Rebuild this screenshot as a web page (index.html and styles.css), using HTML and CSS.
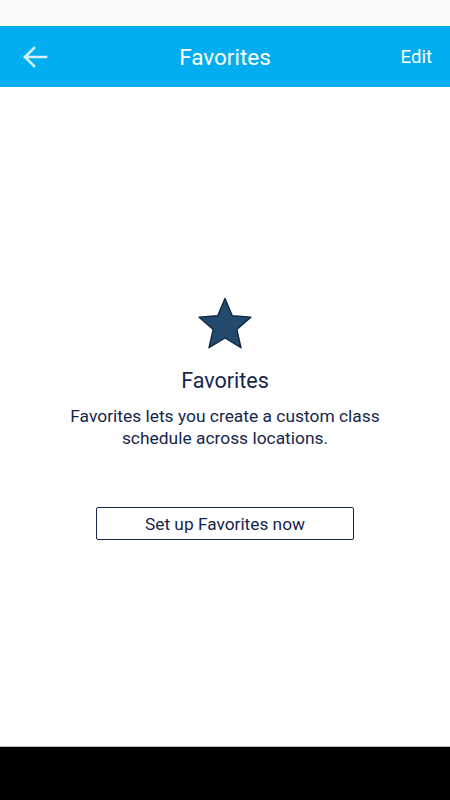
FILE: index.html
```html
<!DOCTYPE html>
<html>
<head>
<meta charset="utf-8">
<link rel="stylesheet" href="styles.css">
</head>
<body>
<div class="screen">
  <div class="status"></div>
  <header class="appbar">
    <svg class="back" width="26" height="22" viewBox="0 0 26 22">
      <path d="M24 11H3M12 2L3 11l9 9" fill="none" stroke="#d6f0fb" stroke-width="2.6" stroke-linecap="square"/>
    </svg>
    <div class="title">Favorites</div>
    <div class="edit">Edit</div>
  </header>
  <main class="content">
    <svg class="star" width="58" height="56" viewBox="0 0 58 56">
      <path d="M29 2.5l7.3 17.2 18.6 1.6-14.1 12.2 4.2 18.2L29 42l-16 9.7 4.2-18.2L3.1 21.3l18.6-1.6z" fill="#234a6c" stroke="#102a45" stroke-width="1.4" stroke-linejoin="round"/>
    </svg>
    <h1 class="heading">Favorites</h1>
    <p class="desc">Favorites lets you create a custom class<br>schedule across locations.</p>
    <button class="setup">Set up Favorites now</button>
  </main>
  <div class="navbar"></div>
</div>
</body>
</html>
```
FILE: styles.css
```css
html, body { margin: 0; padding: 0; }
body { font-family: Roboto, "Noto Sans", sans-serif; background: #fff; }
.screen { width: 450px; height: 800px; display: flex; flex-direction: column; }
.status { height: 26px; background: #fafafa; }
.appbar { height: 61px; background: #03aef0; display: flex; align-items: center; position: relative; padding: 0 18px 0 22px; box-sizing: border-box; justify-content: space-between; }
.back { display: block; }
.title { position: absolute; left: 0; right: 0; text-align: center; color: #fff; font-size: 22.5px; pointer-events: none; }
.edit { color: #fff; font-size: 18.6px; }
.content { flex: 1; display: flex; flex-direction: column; align-items: center; padding-top: 209px; box-sizing: border-box; }
.star { display: block; }
.heading { margin: 16px 0 0; font-size: 21.5px; font-weight: 400; color: #15264d; line-height: 26px; }
.desc { margin: 11px 0 0; font-size: 17.4px; line-height: 22px; color: #15264d; text-align: center; }
.setup { margin-top: 58px; width: 258px; height: 33px; background: #fff; border: 1px solid #15264d; border-radius: 2px; font-family: Roboto, sans-serif; font-size: 17.3px; color: #15264d; padding: 0; }
.navbar { height: 53px; background: #000; border-top: 1px solid #bdbdbd; }
```
